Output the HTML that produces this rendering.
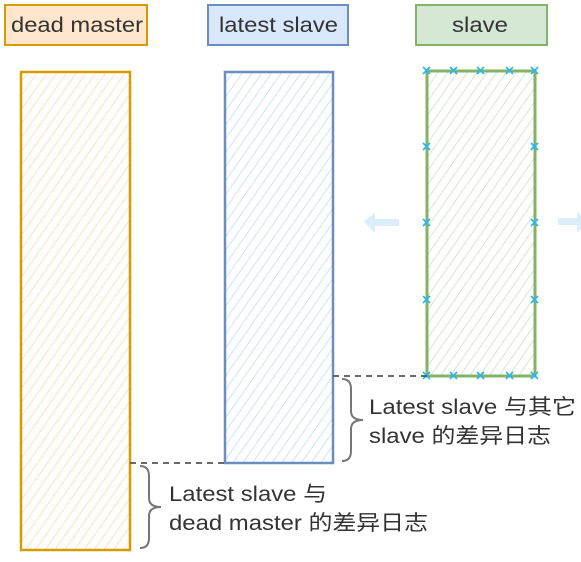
<!DOCTYPE html>
<html><head><meta charset="utf-8"><style>
html,body{margin:0;padding:0;background:#fff;width:581px;height:562px;overflow:hidden}
text{font-family:"Liberation Sans","Noto Sans CJK SC",sans-serif;fill:#333}
</style></head><body>
<svg width="581" height="562" viewBox="0 0 581 562" xmlns="http://www.w3.org/2000/svg">
<defs>
<pattern id="po" width="8" height="8" patternUnits="userSpaceOnUse" patternTransform="rotate(35)"><line x1="0" y1="0" x2="0" y2="8" stroke="#ffcf9e" stroke-width="1.3"/></pattern>
<pattern id="pb" width="8" height="8" patternUnits="userSpaceOnUse" patternTransform="rotate(35)"><line x1="0" y1="0" x2="0" y2="8" stroke="#b9d4f2" stroke-width="1.3"/></pattern>
<pattern id="pg" width="8" height="8" patternUnits="userSpaceOnUse" patternTransform="rotate(35)"><line x1="0" y1="0" x2="0" y2="8" stroke="#bcdcb5" stroke-width="1.3"/></pattern>
</defs>
<rect x="5" y="5" width="142" height="40" fill="#ffe6cc" stroke="#d79b00" stroke-width="2"/>
<text x="11" y="32" font-size="21" textLength="132" lengthAdjust="spacingAndGlyphs">dead master</text>
<rect x="208" y="5" width="140" height="40" fill="#dae8fc" stroke="#6c8ebf" stroke-width="2"/>
<text x="219" y="32" font-size="21" textLength="119" lengthAdjust="spacingAndGlyphs">latest slave</text>
<rect x="416" y="5" width="131" height="40" fill="#d5e8d4" stroke="#82b366" stroke-width="2"/>
<text x="452" y="32" font-size="21" textLength="56" lengthAdjust="spacingAndGlyphs">slave</text>

<rect x="21" y="72" width="109" height="478" fill="url(#po)" stroke="#d79b00" stroke-width="2.5"/>
<rect x="225" y="72" width="108" height="391" fill="url(#pb)" stroke="#6c8ebf" stroke-width="2.5"/>
<rect x="427" y="71" width="108" height="305" fill="url(#pg)" stroke="#82b366" stroke-width="3"/>

<g stroke="#29b6f2" stroke-width="1.6">
<path d="M423 67l7 7m0-7l-7 7M450 67l7 7m0-7l-7 7M477 67l7 7m0-7l-7 7M506 67l7 7m0-7l-7 7M531 67l7 7m0-7l-7 7"/>
<path d="M423 143l7 7m0-7l-7 7M423 219l7 7m0-7l-7 7M423 296l7 7m0-7l-7 7M531 143l7 7m0-7l-7 7M531 219l7 7m0-7l-7 7M531 296l7 7m0-7l-7 7"/>
<path d="M423 372l7 7m0-7l-7 7M450 372l7 7m0-7l-7 7M477 372l7 7m0-7l-7 7M506 372l7 7m0-7l-7 7M531 372l7 7m0-7l-7 7"/>
</g>

<path d="M364 222l11-10v7h24v7h-24v7z" fill="#dbeefa"/>
<path d="M558 218h19v-7l11 11-11 11v-8h-19z" fill="#dbeefa"/>

<path d="M130 463H225" stroke="#555" stroke-width="1.8" stroke-dasharray="6 5"/>
<path d="M333 376H427" stroke="#555" stroke-width="1.8" stroke-dasharray="6 5"/>

<path d="M140 466q9 0 9 10v22q0 9 12 9q-12 0-12 9v22q0 10-9 10" fill="none" stroke="#777" stroke-width="2"/>
<path d="M342 379q9 0 9 10v22q0 9 12 9q-12 0-12 9v22q0 10-9 10" fill="none" stroke="#777" stroke-width="2"/>

<text x="369" y="414" font-size="21" textLength="207" lengthAdjust="spacingAndGlyphs">Latest slave 与其它</text>
<text x="369" y="443" font-size="21" textLength="182" lengthAdjust="spacingAndGlyphs">slave 的差异日志</text>
<text x="169" y="501" font-size="21" textLength="158" lengthAdjust="spacingAndGlyphs">Latest slave 与</text>
<text x="169" y="530" font-size="21" textLength="259" lengthAdjust="spacingAndGlyphs">dead master 的差异日志</text>
</svg>
</body></html>
